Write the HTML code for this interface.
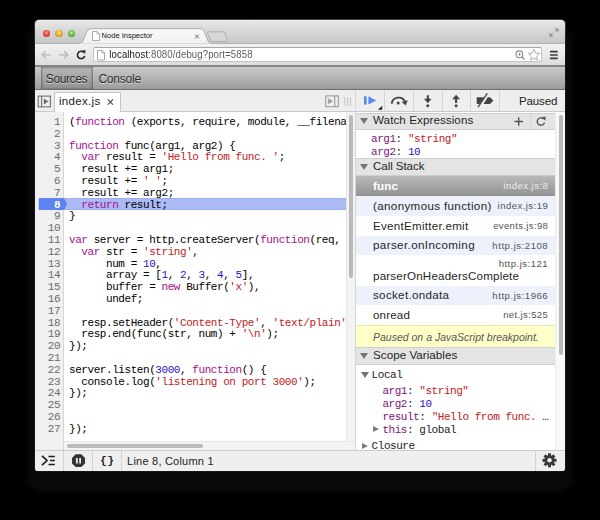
<!DOCTYPE html>
<html>
<head>
<meta charset="utf-8">
<title>Node Inspector</title>
<style>
html,body{margin:0;padding:0;}
body{width:600px;height:520px;background:#000;overflow:hidden;position:relative;font-family:"Liberation Sans",sans-serif;}
*{box-sizing:border-box;}
.abs{position:absolute;}
#shadow{left:27px;top:27px;width:545.5px;height:465px;border-radius:14px;background:#090909;filter:blur(2.5px);}
#ring{left:33.6px;top:19.2px;width:532.8px;height:453px;border-radius:6px 6px 4px 4px;background:linear-gradient(#3c3c3c,#161616 6%,#161616);}
#win{left:35px;top:20.4px;width:530px;height:450.6px;border-radius:4.5px 4.5px 3px 3px;overflow:hidden;background:#fff;}
#pg{left:-35px;top:-20.4px;width:600px;height:520px;}
/* children of #pg use page coordinates */
#titlebar{left:35px;top:20px;width:530px;height:24px;background:linear-gradient(#e8e8e8,#d9d9d9 40%,#c5c5c5);}
#tbhl{left:35px;top:20.4px;width:530px;height:1px;background:#f6f6f6;}
.tl{width:7.3px;height:7.3px;border-radius:50%;top:30px;}
#navbar{left:35px;top:43.6px;width:530px;height:21.6px;background:linear-gradient(#f1f1f1,#e9e9e9 50%,#dcdcdc);}
#navline{left:35px;top:65.100px;width:530px;height:1.6px;background:#858585;}
#omni{left:93px;top:46.8px;width:448.6px;height:15.6px;background:#fff;border:1px solid #c2c2c2;border-top-color:#a6a6a6;border-radius:2.5px;}
#url{left:109.3px;top:48.6px;font-size:9.6px;line-height:12px;color:#5c5c5c;white-space:nowrap;letter-spacing:0.11px;transform:scaleY(1.07);transform-origin:0 9.6px;}
#url b{font-weight:normal;color:#111;}
#dtbar{left:35px;top:66.6px;width:530px;height:23.8px;background:linear-gradient(#c9c9c9,#b4b4b4 50%,#9b9b9b);border-bottom:1px solid #6e6e6e;}
#srcTab{left:40.6px;top:66.6px;width:52.6px;height:22.8px;background:linear-gradient(#b7b7b7,#a5a5a5 50%,#909090);box-shadow:inset 1.2px 0 1.6px rgba(0,0,0,.28), inset -1.2px 0 1.6px rgba(0,0,0,.28), inset 0 1px 1.5px rgba(0,0,0,.15);}
.dtlabel{top:71.6px;font-size:12px;line-height:14px;color:#2e2e2e;text-shadow:0 1px 0 rgba(255,255,255,.5);white-space:nowrap;}
#tabbar{left:35px;top:90.4px;width:530px;height:22px;background:#eeeeee;border-bottom:1px solid #c9c9c9;}
#filetab{left:54.4px;top:92.2px;width:66.8px;height:20.2px;background:#fff;border:1px solid #c4c4c4;border-bottom:none;}
#filetab span{position:absolute;left:3.6px;top:1.3px;font-size:11.5px;line-height:14px;color:#222;white-space:nowrap;letter-spacing:0.32px;}
#gutter{left:35px;top:112.4px;width:28.6px;height:338px;background:#f0f0f0;border-right:1px solid #d6d6d6;}
#code{left:0;top:0;width:346px;height:441px;overflow:hidden;font-family:"Liberation Mono",monospace;font-size:11px;letter-spacing:-0.435px;line-height:11.8px;white-space:pre;color:#000;}
#code .l{position:absolute;left:0;height:11.8px;width:347px;}
#code .n{position:absolute;left:35px;width:25.2px;text-align:right;color:#6c6c6c;}
#code .n.cur{color:#fff;font-weight:bold;}
#code .c{position:absolute;left:69px;}
.k{color:#a50e8e;}.s{color:#c2201c;}.d{color:#2812c9;}
#execline{left:64px;width:282px;height:12.1px;background:#abb9f5;box-shadow:inset 0 1px 0 #9badf3, inset 0 -1px 0 #9badf3;}
#vscroll{left:346px;top:112.4px;width:9px;height:329px;background:#f3f3f3;border-left:1px solid #e6e6e6;}
#vthumb{left:348.8px;top:115.2px;width:4.4px;height:162.8px;background:#bababa;border-radius:2.2px;}
#hscroll{left:64px;top:441px;width:291px;height:9.4px;background:#f3f3f3;border-top:1px solid #e8e8e8;}
#hthumb{left:66.6px;top:444px;width:136.6px;height:4.2px;background:#bababa;border-radius:2.1px;}
#splitter{left:354.8px;top:90.4px;width:1.2px;height:361px;background:#d6d6d6;}
#side{left:356px;top:112px;width:209px;height:338.4px;background:#fff;}
.hdr{left:356px;width:199.4px;background:#e4e4e4;border-top:1px solid #cdcdcd;border-bottom:1px solid #cdcdcd;}
.hdr span{position:absolute;left:17px;font-size:11.6px;line-height:14px;color:#1f1f1f;white-space:nowrap;}
.tri{position:absolute;width:0;height:0;}
.tri.down{border-left:4.1px solid transparent;border-right:4.1px solid transparent;border-top:6.8px solid #747474;}
.tri.right{border-top:3.7px solid transparent;border-bottom:3.7px solid transparent;border-left:6.4px solid #7c7c7c;}
.mono{font-family:"Liberation Mono",monospace;font-size:11px;letter-spacing:-0.45px;line-height:12px;white-space:pre;color:#222;}
.pn{color:#80127c;}
.frame{left:356px;width:199.4px;}
.frame.alt{background:#ecf1fb;}
.frame.sel{background:linear-gradient(#b9b9b9,#a6a6a6 50%,#939393);}
.frame .f{position:absolute;left:17px;top:2.5px;font-size:11.6px;line-height:14px;color:#1f1f1f;white-space:nowrap;letter-spacing:0.36px;}
.frame .r{position:absolute;right:7.2px;top:4.1px;font-size:9.6px;line-height:12px;color:#555;white-space:nowrap;letter-spacing:0.3px;}
.frame.sel .f{color:#fff;font-weight:bold;letter-spacing:0.2px;top:3.7px;}
.frame.sel .r{color:#ececec;}
#paused{left:356px;top:325px;width:199.4px;height:22.4px;background:#ffffc8;border-top:1px solid #e6e6aa;}
#paused span{position:absolute;left:17px;top:4.4px;font-size:10.5px;line-height:14px;font-style:italic;color:#585858;white-space:nowrap;letter-spacing:0px;}
#statusbar{left:35px;top:450.4px;width:530px;height:21px;background:#efefef;border-top:1px solid #cbcbcb;}
.vsep{width:1px;background:#d2d2d2;top:451.4px;height:20px;}
#sscroll{left:555.4px;top:112px;width:9.6px;height:338.4px;background:#f8f8f8;border-left:1px solid #ececec;}
#sthumb{left:558.7px;top:115px;width:4.1px;height:240px;background:#bababa;border-radius:2.1px;}
</style>
</head>
<body>
<div id="shadow" class="abs"></div>
<div id="ring" class="abs"></div>
<div id="win" class="abs"><div id="pg" class="abs">
  <!-- title bar -->
  <div id="titlebar" class="abs"></div>
  <div id="tbhl" class="abs"></div>
  <div class="abs tl" style="left:43.200px;background:radial-gradient(circle at 50% 38%,#ffb0a6 0,#f0574d 35%,#d8382f 70%,#a8322b 100%);"></div>
  <div class="abs tl" style="left:55.300px;background:radial-gradient(circle at 50% 38%,#ffe9a0 0,#f3b73a 35%,#dc9a20 70%,#a87a22 100%);"></div>
  <div class="abs tl" style="left:67.800px;background:radial-gradient(circle at 50% 38%,#d2f5b0 0,#78c850 35%,#52ab34 70%,#3f8530 100%);"></div>
  <svg class="abs" style="left:35px;top:20px" width="530" height="47" viewBox="0 0 530 47">
    <defs>
      <linearGradient id="tg" x1="0" y1="0" x2="0" y2="1"><stop offset="0" stop-color="#f8f8f8"/><stop offset="1" stop-color="#f1f1f1"/></linearGradient>
    </defs>
    <path d="M0,23.600 L45.500,23.600 M175.500,23.600 L530,23.600" stroke="#ababab" stroke-width="0.800"/>
    <!-- new tab button -->
    <path d="M173,11.800 L188,11.800 Q189.500,11.800 190,13.200 L192,19.800 Q192.500,21.500 191,21.500 L177.600,21.500 Q176.100,21.500 175.600,20 L172.600,13.300 Q172,11.800 173,11.800 Z" fill="#d6d6d6" stroke="#a4a4a4" stroke-width="0.8"/>
    <!-- active tab -->
    <path d="M44,23.800 Q47,23.500 48,21 L52,11.500 Q53,8.700 56,8.700 L165,8.700 Q168,8.700 169,11.200 L173,21 Q174,23.500 177,23.800 Z" fill="url(#tg)" stroke="#a2a2a2" stroke-width="0.8"/>
    <rect x="45" y="23.400" width="131" height="1.400" fill="#f1f1f1"/>
    <!-- page icon on tab -->
    <path d="M57.500,11.500 L62,11.500 L64.500,14 L64.500,20.500 L57.500,20.500 Z" fill="#fff" stroke="#9a9a9a" stroke-width="0.8"/>
    <path d="M62,11.500 L62,14 L64.500,14" fill="none" stroke="#9a9a9a" stroke-width="0.7"/>
    <!-- tab close -->
    <path d="M160.200,14.700 L163.800,18.300 M163.800,14.700 L160.200,18.300" stroke="#666" stroke-width="1"/>
    <!-- fullscreen icon -->
    <path d="M519.500,8.500 L523.500,8.500 L523.500,12.500 Z M518.500,16.500 L514.500,16.500 L514.500,12.500 Z" fill="#8f8f8f"/>
    <path d="M516.5,14.5 L521.5,10.500" stroke="#8f8f8f" stroke-width="1" stroke-dasharray="1.6 2.4"/>
  </svg>
  <div class="abs" style="left:101.600px;top:29.800px;font-size:7.600px;line-height:11px;color:#161616;white-space:nowrap;letter-spacing:-0.040px;">Node Inspector</div>

  <!-- nav bar -->
  <div id="navbar" class="abs"></div>
  <div id="navline" class="abs"></div>
  <div id="omni" class="abs"></div>
  <svg class="abs" style="left:35px;top:44px" width="530" height="22" viewBox="0 0 530 22">
    <!-- back -->
    <path d="M7.200,10.800 L15.800,10.800 M10.700,7.300 L7.200,10.800 L10.700,14.300" fill="none" stroke="#b7b7b7" stroke-width="1.300"/>
    <!-- forward -->
    <path d="M24.200,10.800 L32.800,10.800 M29.300,7.300 L32.800,10.800 L29.300,14.300" fill="none" stroke="#b7b7b7" stroke-width="1.300"/>
    <!-- reload -->
    <path d="M48.700,8.300 A3.700,3.700 0 1 0 49.700,12" fill="none" stroke="#2a2a2a" stroke-width="1.600"/>
    <path d="M46.600,6.700 L50.500,5.900 L50.100,10 Z" fill="#2a2a2a"/>
    <!-- page icon -->
    <path d="M62.500,6.500 L67,6.500 L69.500,9 L69.500,16 L62.500,16 Z" fill="#fff" stroke="#8d8d8d" stroke-width="0.8"/>
    <path d="M67,6.500 L67,9 L69.500,9" fill="none" stroke="#8d8d8d" stroke-width="0.7"/>
    <!-- zoom icon -->
    <circle cx="484.400" cy="10.300" r="3.400" fill="none" stroke="#8a8a8a" stroke-width="1.100"/>
    <path d="M487,13 L489.500,15.500" stroke="#8a8a8a" stroke-width="1.400"/>
    <path d="M482.900,10.300 L485.900,10.300 M484.400,8.800 L484.400,11.800" stroke="#8a8a8a" stroke-width="0.8"/>
    <!-- star -->
    <path d="M499,5.200 L500.700,9 L504.600,9.400 L501.700,12.100 L502.500,16 L499,14 L495.500,16 L496.300,12.100 L493.400,9.400 L497.300,9 Z" fill="#fff" stroke="#9a9a9a" stroke-width="0.8"/>
    <!-- menu -->
    <path d="M515,7.600 L522.700,7.600 M515,11 L522.700,11 M515,14.400 L522.700,14.400" stroke="#3a3a3a" stroke-width="1.700"/>
  </svg>
  <div id="url" class="abs"><b>localhost</b>:8080/debug?port=5858</div>

  <!-- devtools toolbar -->
  <div id="dtbar" class="abs"></div>
  <div id="srcTab" class="abs"></div>
  <div class="abs dtlabel" style="left:45.800px;letter-spacing:-0.4px;">Sources</div>
  <div class="abs dtlabel" style="left:98.400px;letter-spacing:-0.22px;">Console</div>

  <!-- file tab bar -->
  <div id="tabbar" class="abs"></div>
  <div id="filetab" class="abs"><span>index.js</span></div>
  <svg class="abs" style="left:35px;top:89px" width="530" height="23" viewBox="0 0 530 23">
    <!-- navigator toggle -->
    <rect x="3.200" y="7.100" width="12.200" height="10.800" fill="none" stroke="#6f6f6f" stroke-width="1.100"/>
    <path d="M6.600,7.100 L6.600,17.900" stroke="#6f6f6f" stroke-width="1.100"/>
    <path d="M8.800,9.500 L13.400,12.500 L8.800,15.500 Z" fill="#6f6f6f"/>
    <!-- tab close -->
    <path d="M72.800,10.400 L78,15.600 M78,10.400 L72.800,15.600" stroke="#4d4d4d" stroke-width="1.200"/>
    <!-- right side toggle -->
    <rect x="290.800" y="6.900" width="12.600" height="10.800" fill="none" stroke="#9b9b9b" stroke-width="1.100"/>
    <path d="M299.700,6.900 L299.700,17.700" stroke="#9b9b9b" stroke-width="1.100"/>
    <path d="M293.200,9.300 L298,12.300 L293.200,15.300 Z" fill="#9b9b9b"/>
    <path d="M309.700,8.300 L309.700,16.700 M312.500,8.300 L312.500,16.700 M315.300,8.300 L315.300,16.700" stroke="#c4c4c4" stroke-width="1"/>
    <!-- debug toolbar separators -->
    <path d="M349.500,1.500 L349.500,23 M378.500,1.500 L378.500,23 M407.500,1.500 L407.500,23 M435.500,1.500 L435.500,23 M464.500,1.500 L464.500,23" stroke="#d4d4d4" stroke-width="1"/>
    <!-- resume -->
    <rect x="329" y="7.300" width="2.600" height="8.300" fill="#548bef"/>
    <path d="M333.400,7.300 L341.200,11.450 L333.400,15.600 Z" fill="#548bef"/>
    <path d="M347.200,16.800 L347.200,20.800 L343,20.800 Z" fill="#222"/>
    <!-- step over -->
    <path d="M356.700,14.600 A7,7 0 0 1 370.200,13.200" fill="none" stroke="#444" stroke-width="1.900"/>
    <path d="M366.700,12.900 L372.800,11.300 L370.600,16.600 Z" fill="#444"/>
    <circle cx="363.200" cy="14" r="1.500" fill="#444"/>
    <!-- step into -->
    <path d="M392.800,6.300 L392.800,11.500" stroke="#444" stroke-width="2.100"/>
    <path d="M389,9.800 L396.600,9.800 L392.800,14.200 Z" fill="#444"/>
    <circle cx="392.800" cy="16.700" r="1.500" fill="#444"/>
    <!-- step out -->
    <path d="M421.100,9 L421.100,14" stroke="#444" stroke-width="2.100"/>
    <path d="M417.200,10.200 L425,10.200 L421.100,5.800 Z" fill="#444"/>
    <circle cx="421.100" cy="16.700" r="1.500" fill="#444"/>
    <!-- deactivate breakpoints -->
    <path d="M441.700,8.200 L448.900,8.200 L444.800,14.900 L441.700,14.900 Z" fill="#444"/>
    <path d="M452.800,8.200 L455,8.200 L458.400,11.550 L455,14.900 L448.500,14.900 Z" fill="#444"/>
    <path d="M443,18.200 L452.300,4.300" stroke="#444" stroke-width="1.300"/>
  </svg>
  <div class="abs" style="left:518.900px;top:94.400px;font-size:11.600px;line-height:14px;color:#222;letter-spacing:-0.16px;">Paused</div>

  <!-- code -->
  <div id="gutter" class="abs"></div>
  <div id="execline" class="abs" style="top:198.40px"></div>
  <svg class="abs" style="left:35px;top:198.40px" width="34" height="12.100" viewBox="0 0 34 12.100">
    <path d="M4.200,0.400 L28.600,0.400 L31.600,6.050 L28.600,11.700 L4.200,11.700 Z" fill="#5c83ef" stroke="#4b72ee" stroke-width="0.8"/>
  </svg>
  <div id="code" class="abs">
<div class="l" style="top:117.00px"><span class="n">1</span><span class="c">(<span class="k">function</span> (exports, require, module, __filena</span></div>
<div class="l" style="top:128.80px"><span class="n">2</span><span class="c"></span></div>
<div class="l" style="top:140.60px"><span class="n">3</span><span class="c"><span class="k">function</span> func(arg1, arg2) {</span></div>
<div class="l" style="top:152.40px"><span class="n">4</span><span class="c">  <span class="k">var</span> result = <span class="s">'Hello from func. '</span>;</span></div>
<div class="l" style="top:164.20px"><span class="n">5</span><span class="c">  result += arg1;</span></div>
<div class="l" style="top:176.00px"><span class="n">6</span><span class="c">  result += <span class="s">' '</span>;</span></div>
<div class="l" style="top:187.80px"><span class="n">7</span><span class="c">  result += arg2;</span></div>
<div class="l" style="top:199.60px"><span class="n cur">8</span><span class="c">  <span class="k">return</span> result;</span></div>
<div class="l" style="top:211.40px"><span class="n">9</span><span class="c">}</span></div>
<div class="l" style="top:223.20px"><span class="n">10</span><span class="c"></span></div>
<div class="l" style="top:235.00px"><span class="n">11</span><span class="c"><span class="k">var</span> server = http.createServer(<span class="k">function</span>(req,</span></div>
<div class="l" style="top:246.80px"><span class="n">12</span><span class="c">  <span class="k">var</span> str = <span class="s">'string'</span>,</span></div>
<div class="l" style="top:258.60px"><span class="n">13</span><span class="c">      num = <span class="d">10</span>,</span></div>
<div class="l" style="top:270.40px"><span class="n">14</span><span class="c">      array = [<span class="d">1</span>, <span class="d">2</span>, <span class="d">3</span>, <span class="d">4</span>, <span class="d">5</span>],</span></div>
<div class="l" style="top:282.20px"><span class="n">15</span><span class="c">      buffer = <span class="k">new</span> Buffer(<span class="s">'x'</span>),</span></div>
<div class="l" style="top:294.00px"><span class="n">16</span><span class="c">      undef;</span></div>
<div class="l" style="top:305.80px"><span class="n">17</span><span class="c"></span></div>
<div class="l" style="top:317.60px"><span class="n">18</span><span class="c">  resp.setHeader(<span class="s">'Content-Type'</span>, <span class="s">'text/plain'</span></span></div>
<div class="l" style="top:329.40px"><span class="n">19</span><span class="c">  resp.end(func(str, num) + <span class="s">'\n'</span>);</span></div>
<div class="l" style="top:341.20px"><span class="n">20</span><span class="c">});</span></div>
<div class="l" style="top:353.00px"><span class="n">21</span><span class="c"></span></div>
<div class="l" style="top:364.80px"><span class="n">22</span><span class="c">server.listen(<span class="d">3000</span>, <span class="k">function</span>() {</span></div>
<div class="l" style="top:376.60px"><span class="n">23</span><span class="c">  console.log(<span class="s">'listening on port 3000'</span>);</span></div>
<div class="l" style="top:388.40px"><span class="n">24</span><span class="c">});</span></div>
<div class="l" style="top:400.20px"><span class="n">25</span><span class="c"></span></div>
<div class="l" style="top:412.00px"><span class="n">26</span><span class="c"></span></div>
<div class="l" style="top:423.80px"><span class="n">27</span><span class="c">});</span></div>
  </div>
  <div id="vscroll" class="abs"></div>
  <div id="vthumb" class="abs"></div>
  <div id="hscroll" class="abs"></div>
  <div id="hthumb" class="abs"></div>
  <div id="splitter" class="abs"></div>

  <!-- sidebar -->
  <div id="side" class="abs"></div>
  <div id="sscroll" class="abs"></div>
  <div id="sthumb" class="abs"></div>

  <div class="abs hdr" style="top:112.500px;height:17.400px;"><i class="tri down" style="left:4.400px;top:4.300px;"></i><span style="top:-0.300px;letter-spacing:0.09px;">Watch Expressions</span></div>
  <svg class="abs" style="left:504px;top:112.600px" width="51.400" height="17" viewBox="0 0 51.400 17">
    <path d="M10.500,8.500 L19,8.500 M14.700,4.300 L14.700,12.700" stroke="#555" stroke-width="1.400"/>
    <path d="M26.500,0.500 L26.500,16.500" stroke="#d6d6d6" stroke-width="1"/>
    <path d="M39.700,6.100 A3.700,3.700 0 1 0 40.500,9.600" fill="none" stroke="#555" stroke-width="1.400"/>
    <path d="M37.600,4 L41.700,3.700 L41.400,7.800 Z" fill="#555"/>
  </svg>
  <div class="abs mono" style="left:371px;top:132.600px;"><span class="pn">arg1</span>: <span class="s">"string"</span></div>
  <div class="abs mono" style="left:371px;top:145.600px;"><span class="pn">arg2</span>: <span class="d">10</span></div>

  <div class="abs hdr" style="top:157.800px;height:18px;"><i class="tri down" style="left:4.400px;top:4.900px;"></i><span style="top:0.100px;letter-spacing:-0.08px;">Call Stack</span></div>
<div class="abs frame sel" style="top:175.8px;height:20.6px;"><span class="f" style="letter-spacing:0.20px;">func</span><span class="r" style="letter-spacing:0.42px;">index.js:8</span></div>
<div class="abs frame alt" style="top:196.4px;height:19.6px;"><span class="f" style="letter-spacing:0.36px;">(anonymous function)</span><span class="r" style="letter-spacing:0.43px;">index.js:19</span></div>
<div class="abs frame " style="top:216.0px;height:19.6px;"><span class="f" style="letter-spacing:0.27px;">EventEmitter.emit</span><span class="r" style="letter-spacing:0.32px;">events.js:98</span></div>
<div class="abs frame alt" style="top:235.6px;height:19.2px;"><span class="f" style="letter-spacing:0.39px;">parser.onIncoming</span><span class="r" style="letter-spacing:0.52px;">http.js:2108</span></div>
<div class="abs frame" style="top:254.8px;height:31.0px;"><span class="f" style="top:13.8px;letter-spacing:0.19px;">parserOnHeadersComplete</span><span class="r" style="top:3.7px;letter-spacing:0.48px;">http.js:121</span></div>
<div class="abs frame alt" style="top:285.8px;height:19.4px;"><span class="f" style="letter-spacing:0.32px;">socket.ondata</span><span class="r" style="letter-spacing:0.52px;">http.js:1966</span></div>
<div class="abs frame " style="top:305.2px;height:19.8px;"><span class="f" style="letter-spacing:0.15px;">onread</span><span class="r" style="letter-spacing:0.34px;">net.js:525</span></div>
  <div id="paused" class="abs"><span>Paused on a JavaScript breakpoint.</span></div>

  <div class="abs hdr" style="top:347.200px;height:18.200px;"><i class="tri down" style="left:4.400px;top:4.700px;"></i><span style="top:0.100px;letter-spacing:0.05px;">Scope Variables</span></div>
  <i class="tri down" style="left:360.600px;top:372.300px;"></i>
  <div class="abs mono" style="left:371.600px;top:369px;">Local</div>
  <div class="abs mono" style="left:382.400px;top:384.900px;"><span class="pn">arg1</span>: <span class="s">"string"</span></div>
  <div class="abs mono" style="left:382.400px;top:397.800px;"><span class="pn">arg2</span>: <span class="d">10</span></div>
  <div class="abs mono" style="left:382.400px;top:410.700px;"><span class="pn">result</span>: <span class="s">"Hello from func. </span>…</div>
  <i class="tri right" style="left:373.200px;top:426.000px;"></i>
  <div class="abs mono" style="left:382.400px;top:424.000px;"><span class="pn">this</span>: global</div>
  <i class="tri right" style="left:362.200px;top:442.600px;"></i>
  <div class="abs mono" style="left:371.600px;top:440.300px;">Closure</div>

  <!-- status bar -->
  <div id="statusbar" class="abs"></div>
  <div class="abs vsep" style="left:63.200px;"></div>
  <div class="abs vsep" style="left:92.300px;"></div>
  <div class="abs vsep" style="left:120.900px;"></div>
  <div class="abs vsep" style="left:534.800px;"></div>
  <svg class="abs" style="left:35px;top:451px" width="530" height="20" viewBox="0 0 530 20">
    <!-- console icon -->
    <path d="M7,4.800 L12,9.500 L7,14.200" fill="none" stroke="#1e1e1e" stroke-width="1.700"/>
    <path d="M13.500,5.500 L19.800,5.500 M15,9.500 L19.800,9.500 M13.500,13.500 L19.800,13.500" stroke="#1e1e1e" stroke-width="1.600"/>
    <!-- pause on exception -->
    <path d="M40.700,3.300 L46.300,3.300 L50,7 L50,12.400 L46.300,16.100 L40.700,16.100 L37,12.400 L37,7 Z" fill="#353535"/>
    <path d="M41.900,7 L41.900,12.400 M45.100,7 L45.100,12.400" stroke="#fff" stroke-width="1.600"/>
    <!-- gear -->
    <g transform="translate(514.500,9.300)" fill="#383838">
      <circle r="5"/>
      <g>
        <rect x="-1.500" y="-7" width="3" height="14"/>
        <rect x="-1.500" y="-7" width="3" height="14" transform="rotate(45)"/>
        <rect x="-1.500" y="-7" width="3" height="14" transform="rotate(90)"/>
        <rect x="-1.500" y="-7" width="3" height="14" transform="rotate(135)"/>
      </g>
      <circle r="2.200" fill="#efefef"/>
    </g>
  </svg>
  <div class="abs" style="left:100.100px;top:454.000px;font-family:'Liberation Mono',monospace;font-weight:bold;font-size:11.5px;line-height:14px;color:#2a2a2a;letter-spacing:0.3px;">{}</div>
  <div class="abs" style="left:127.100px;top:454.400px;font-size:11px;line-height:14px;color:#222;white-space:nowrap;letter-spacing:0.22px;">Line 8, Column 1</div>
</div></div>
</body>
</html>
